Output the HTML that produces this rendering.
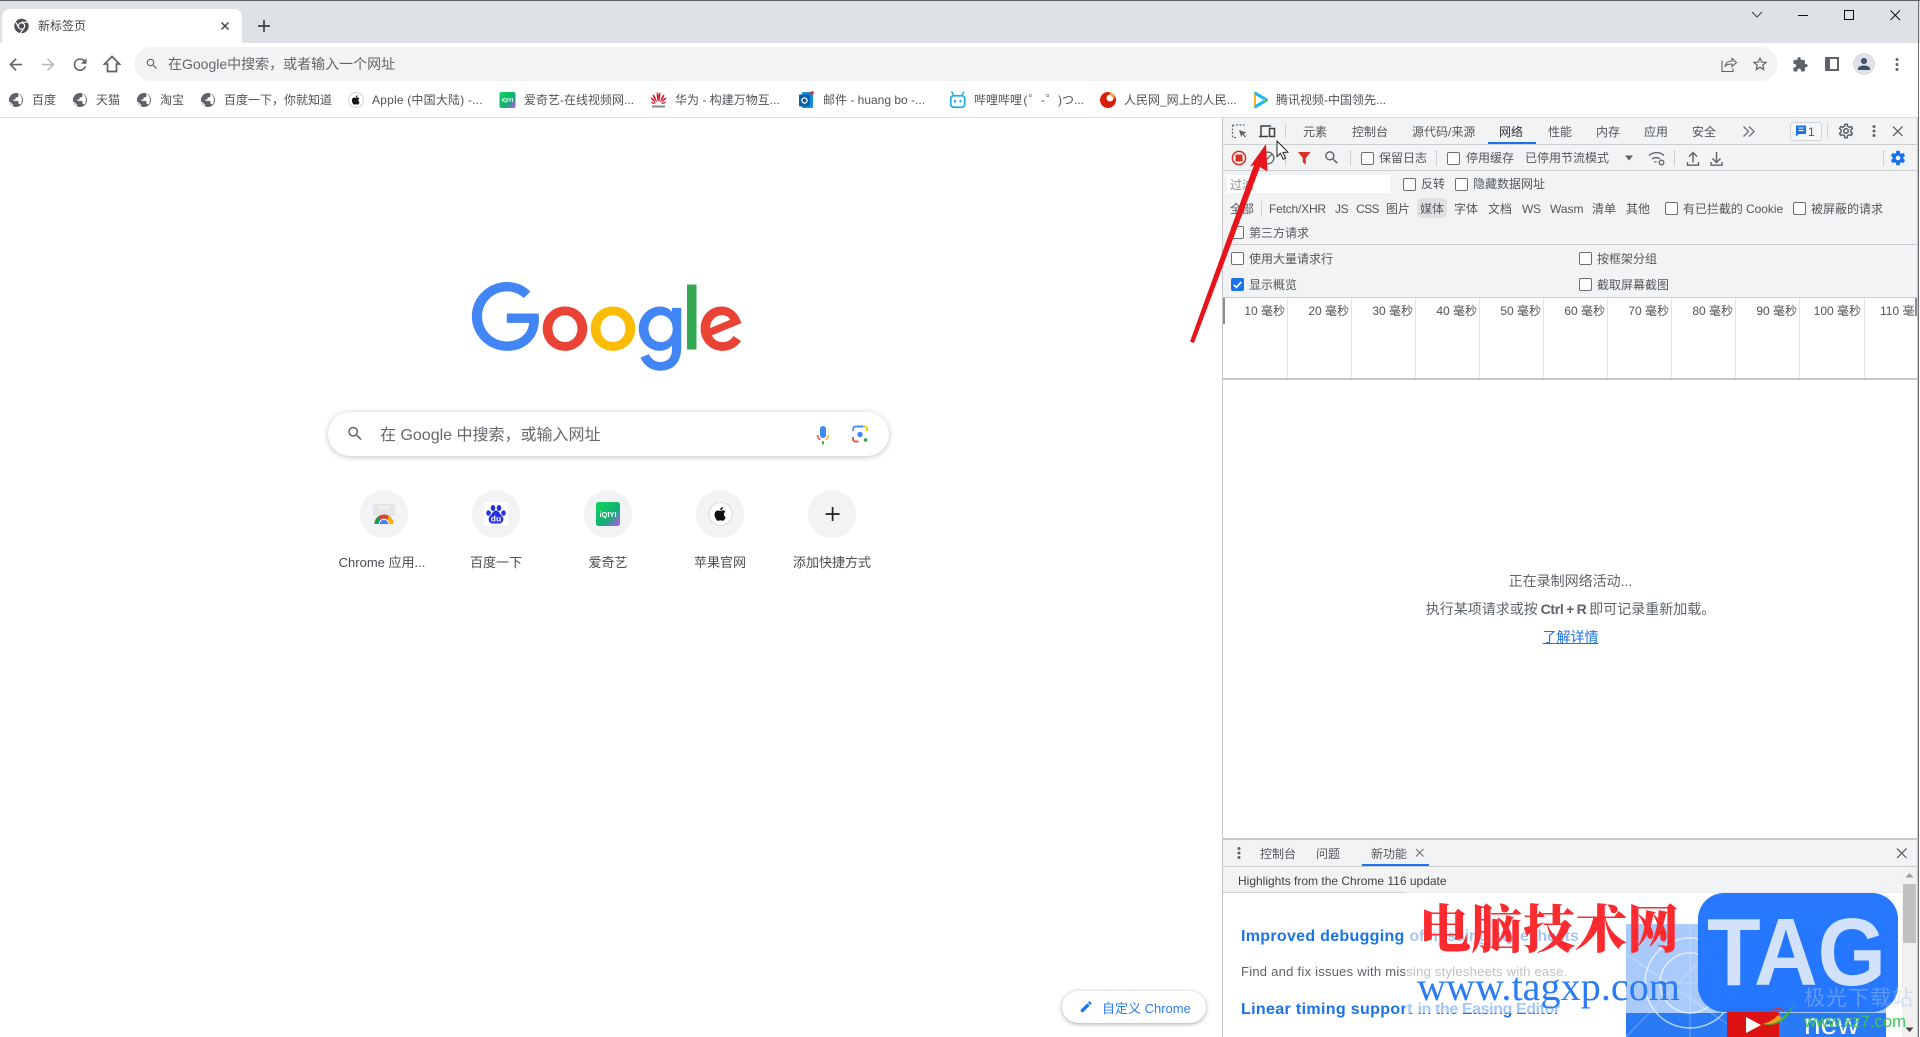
<!DOCTYPE html>
<html lang="zh"><head><meta charset="utf-8"><title>新标签页</title>
<style>
html,body{margin:0;padding:0;width:1920px;height:1037px;overflow:hidden;background:#fff}
body{position:relative;font-family:"Liberation Sans","Noto Sans CJK SC",sans-serif;color:#505357;font-size:12px}
.b{position:absolute}
.t{position:absolute;white-space:nowrap;line-height:16px;height:16px;font-size:12px;color:#54575b}
.k{position:absolute;width:11px;height:11px;border:1px solid #6b6f74;border-radius:2px;background:#fff}
svg.a{position:absolute;left:0;top:0}
.bm{font-size:12px;color:#505357}
.sc{font-size:13px;width:112px;text-align:center;color:#4a4c50}
.ml{font-size:12px;color:#4f5256;width:48px;text-align:right}
</style></head><body>

<!-- chrome frame -->
<div class="b" style="left:0;top:0;width:1920px;height:43px;background:#dee1e6"></div>
<div class="b" style="left:0;top:0;width:1920px;height:1px;background:#5f6368"></div>
<div class="b" style="left:2px;top:9px;width:240px;height:34px;background:#fff;border-radius:8px 8px 0 0"></div>
<div class="b" style="left:134px;top:47px;width:1644px;height:34px;background:#f1f3f4;border-radius:17px"></div>
<div class="b" style="left:0;top:117px;width:1920px;height:1px;background:#dadce0"></div>

<!-- devtools backgrounds -->
<div class="b" style="left:1222px;top:118px;width:696px;height:919px;background:#fff;border-left:1px solid #c4c7cc;box-sizing:border-box"></div>
<div class="b" style="left:1223px;top:118px;width:694px;height:179px;background:#f1f3f4"></div>
<div class="b" style="left:1223px;top:144px;width:694px;height:1px;background:#cbcdd1"></div>
<div class="b" style="left:1223px;top:170px;width:694px;height:1px;background:#cbcdd1"></div>
<div class="b" style="left:1223px;top:244px;width:694px;height:1px;background:#cbcdd1"></div>
<div class="b" style="left:1223px;top:297px;width:694px;height:1px;background:#cbcdd1"></div>
<div class="b" style="left:1223px;top:378px;width:694px;height:2px;background:#c6cacf"></div>
<div class="b" style="left:1223px;top:838px;width:694px;height:2px;background:#c6cacf"></div>
<div class="b" style="left:1223px;top:840px;width:694px;height:53px;background:#f1f3f4"></div>
<div class="b" style="left:1223px;top:866px;width:694px;height:1px;background:#cbcdd1"></div>
<div class="b" style="left:1223px;top:892px;width:679px;height:1px;background:#cbcdd1"></div>
<div class="b" style="left:1917px;top:118px;width:1px;height:919px;background:#c4c7cc"></div>
<div class="b" style="left:1918px;top:0;width:1px;height:1037px;background:#6a6d71"></div>
<div class="b" style="left:1227px;top:175px;width:163px;height:18px;background:#fff"></div>
<div class="b" style="left:1417px;top:198px;width:30px;height:20px;background:#dfe1e5;border-radius:5px"></div>
<div class="b" style="left:1488px;top:142px;width:48px;height:2px;background:#1a73e8"></div>
<div class="b" style="left:1362px;top:864px;width:67px;height:2px;background:#1a73e8"></div>
<div class="b" style="left:1790px;top:122px;width:30px;height:17px;border:1px solid #d0d3d7;border-radius:3px;background:#f6f7f8"></div>
<!-- separators -->
<div class="b" style="left:1285px;top:123px;width:1px;height:16px;background:#cdd0d4"></div>
<div class="b" style="left:1827px;top:123px;width:1px;height:16px;background:#cdd0d4"></div>
<div class="b" style="left:1285px;top:150px;width:1px;height:16px;background:#cdd0d4"></div>
<div class="b" style="left:1350px;top:150px;width:1px;height:16px;background:#cdd0d4"></div>
<div class="b" style="left:1436px;top:150px;width:1px;height:16px;background:#cdd0d4"></div>
<div class="b" style="left:1674px;top:150px;width:1px;height:16px;background:#cdd0d4"></div>
<div class="b" style="left:1883px;top:150px;width:1px;height:16px;background:#cdd0d4"></div>
<div class="b" style="left:1261px;top:201px;width:1px;height:16px;background:#cdd0d4"></div>
<!-- timeline grid -->
<div class="b" style="left:1287px;top:298px;width:1px;height:80px;background:#e3e4e6"></div>
<div class="b" style="left:1351px;top:298px;width:1px;height:80px;background:#e3e4e6"></div>
<div class="b" style="left:1415px;top:298px;width:1px;height:80px;background:#e3e4e6"></div>
<div class="b" style="left:1479px;top:298px;width:1px;height:80px;background:#e3e4e6"></div>
<div class="b" style="left:1543px;top:298px;width:1px;height:80px;background:#e3e4e6"></div>
<div class="b" style="left:1607px;top:298px;width:1px;height:80px;background:#e3e4e6"></div>
<div class="b" style="left:1671px;top:298px;width:1px;height:80px;background:#e3e4e6"></div>
<div class="b" style="left:1735px;top:298px;width:1px;height:80px;background:#e3e4e6"></div>
<div class="b" style="left:1799px;top:298px;width:1px;height:80px;background:#e3e4e6"></div>
<div class="b" style="left:1864px;top:298px;width:1px;height:80px;background:#e3e4e6"></div>
<div class="b" style="left:1223px;top:298px;width:2px;height:26px;background:#8a8d91"></div>
<div class="b" style="left:1915px;top:298px;width:2px;height:18px;background:#8a8d91"></div>

<!-- scrollbar -->
<div class="b" style="left:1902px;top:867px;width:15px;height:170px;background:#f1f1f1"></div>
<div class="b" style="left:1903px;top:884px;width:13px;height:59px;background:#c1c1c1"></div>

<!-- NTP search box & shortcuts -->
<div class="b" style="left:328px;top:412px;width:561px;height:44px;border-radius:22px;background:#fff;box-shadow:0 1px 6px rgba(32,33,36,.28)"></div>
<div class="b" style="left:360px;top:490px;width:48px;height:48px;border-radius:50%;background:#f1f3f4"></div>
<div class="b" style="left:472px;top:490px;width:48px;height:48px;border-radius:50%;background:#f1f3f4"></div>
<div class="b" style="left:584px;top:490px;width:48px;height:48px;border-radius:50%;background:#f1f3f4"></div>
<div class="b" style="left:696px;top:490px;width:48px;height:48px;border-radius:50%;background:#f1f3f4"></div>
<div class="b" style="left:808px;top:490px;width:48px;height:48px;border-radius:50%;background:#f1f3f4"></div>
<div class="b" style="left:1062px;top:991px;width:144px;height:32px;border-radius:16px;background:#fff;box-shadow:0 1px 4px rgba(32,33,36,.4)"></div>

<svg class="a" width="1920" height="1037" viewBox="0 0 1920 1037" xmlns="http://www.w3.org/2000/svg">
<defs>
<g id="globe"><circle cx="8" cy="8" r="7" fill="#5f6368"/><path fill="#fff" d="M7 14.900c-2.600-.4-5-3-5.600-5.600L5 12.500v.9c0 .7.6 1.200 2 1.500zM12.400 12.600c-.2-.5-.7-.9-1.200-.9h-.7V9.600c0-.4-.3-.7-.7-.7H5.500V7.500h1.400c.4 0 .7-.3.7-.7V5.400h1.400c.8 0 1.400-.6 1.400-1.400v-2.400c2.100.8 3.600 3.200 3.600 6.400 0 1.800-.6 3.400-1.600 4.600z"/></g>
</defs>

<!-- tab -->
<circle cx="21.500" cy="26" r="7.200" fill="#4a4d51"/><circle cx="21.500" cy="26" r="3.800" fill="#fff"/><circle cx="21.500" cy="26" r="2.600" fill="#4a4d51"/>
<path d="M21.500 22.200h6.300M18.500 27.500l-3-5.700M23.300 29.400l-3.300 4" stroke="#fff" stroke-width="1.100" fill="none"/>
<path d="M221.500 22.500l7 7m0-7l-7 7" stroke="#45474a" stroke-width="1.500"/>
<path d="M264 20v12M258 26h12" stroke="#3c4043" stroke-width="1.700"/>
<!-- window controls -->
<path d="M1752 12l5 5 5-5" stroke="#3c4043" stroke-width="1" fill="none"/>
<path d="M1798 15.500h10" stroke="#111" stroke-width="1"/>
<rect x="1844.500" y="10.500" width="9" height="9" fill="none" stroke="#111" stroke-width="1"/>
<path d="M1890.500 10.500l9.500 9.500m0-9.500l-9.500 9.500" stroke="#111" stroke-width="1"/>
<!-- nav -->
<g fill="#5f6368">
<path transform="translate(6 55) scale(.8)" d="M20 11H7.830l5.590-5.590L12 4l-8 8 8 8 1.410-1.410L7.830 13H20v-2z"/>
<path transform="translate(38.500 55) scale(.8)" fill="#b7babd" d="M12 4l-1.410 1.410L16.170 11H4v2h12.170l-5.580 5.590L12 20l8-8z"/>
<path transform="translate(70.500 55) scale(.8)" d="M17.650 6.350A7.958 7.958 0 0 0 12 4c-4.420 0-7.990 3.580-7.990 8s3.570 8 7.990 8c3.730 0 6.840-2.550 7.730-6h-2.080A5.990 5.990 0 0 1 12 18c-3.310 0-6-2.690-6-6s2.690-6 6-6c1.660 0 3.140.690 4.220 1.780L13 11h7V4l-2.350 2.350z"/>
</g>
<path d="M112 56.500l-7.500 7.500h3v7.500h9V64h3z" fill="none" stroke="#5f6368" stroke-width="1.700"/>
<path transform="translate(145 57) scale(.58)" fill="#5f6368" d="M15.500 14h-.79l-.28-.27A6.470 6.470 0 0 0 16 9.500 6.500 6.500 0 1 0 9.500 16c1.610 0 3.090-.59 4.230-1.570l.27.280v.79l5 4.990L20.490 19l-4.990-5zm-6 0C7.010 14 5 11.990 5 9.500S7.010 5 9.500 5 14 7.010 14 9.500 11.990 14 9.500 14z"/>
<!-- right toolbar -->
<path d="M1722 60.500v11h11v-3M1725 66c1-3 3.500-5 7-5v-2.500l4.500 4-4.500 4V64c-3 0-5 .5-7 2z" fill="none" stroke="#5f6368" stroke-width="1.100"/>
<path transform="translate(1751 55) scale(.75)" fill="#5f6368" d="M22 9.240l-7.190-.62L12 2 9.190 8.630 2 9.240l5.460 4.730L5.820 21 12 17.270 18.180 21l-1.630-7.030L22 9.240zM12 15.400l-3.760 2.270 1-4.280-3.320-2.880 4.380-.38L12 6.100l1.710 4.040 4.380.38-3.320 2.880 1 4.280L12 15.400z"/>
<path transform="translate(1792 56.500) scale(.68)" fill="#5f6368" d="M20.500 11H19V7c0-1.100-.9-2-2-2h-4V3.500C13 2.120 11.880 1 10.500 1S8 2.120 8 3.500V5H4c-1.100 0-1.990.9-1.990 2v3.800H3.500c1.490 0 2.700 1.210 2.700 2.700s-1.210 2.700-2.700 2.700H2V20c0 1.100.9 2 2 2h3.800v-1.500c0-1.490 1.210-2.700 2.700-2.700 1.490 0 2.700 1.210 2.700 2.700V22H17c1.100 0 2-.9 2-2v-4h1.500c1.380 0 2.500-1.120 2.500-2.500S21.880 11 20.500 11z"/>
<rect x="1825" y="57" width="14" height="14" fill="#5f6368"/><rect x="1830" y="59" width="7" height="10" fill="#fff"/>
<circle cx="1864" cy="64" r="11" fill="#dee1e6"/>
<path transform="translate(1855 55) scale(.75)" fill="#45506a" d="M12 12c2.210 0 4-1.790 4-4s-1.790-4-4-4-4 1.790-4 4 1.790 4 4 4zm0 2c-2.670 0-8 1.340-8 4v2h16v-2c0-2.660-5.330-4-8-4z"/>
<g fill="#5f6368"><circle cx="1897" cy="59.500" r="1.500"/><circle cx="1897" cy="64.500" r="1.500"/><circle cx="1897" cy="69.500" r="1.500"/></g>

<!-- bookmark icons -->
<use href="#globe" x="8" y="92"/><use href="#globe" x="72" y="92"/><use href="#globe" x="136" y="92"/><use href="#globe" x="200" y="92"/>
<circle cx="356" cy="100" r="7.500" fill="#fff" stroke="#d5d5d5"/>
<path transform="translate(350.500 94.500) scale(.46)" fill="#111" d="M17.050 12.540c-.03-2.600 2.120-3.850 2.220-3.910-1.210-1.770-3.090-2.010-3.760-2.040-1.600-.16-3.120.94-3.930.94-.81 0-2.060-.92-3.390-.89-1.740.03-3.350 1.010-4.250 2.570-1.810 3.140-.46 7.800 1.300 10.350.86 1.250 1.890 2.650 3.240 2.600 1.300-.05 1.790-.84 3.360-.84s2.010.84 3.390.81c1.400-.03 2.290-1.270 3.140-2.530.99-1.450 1.400-2.860 1.420-2.930-.03-.01-2.720-1.040-2.740-4.130zM14.470 4.900c.72-.87 1.200-2.080 1.070-3.280-1.030.04-2.280.69-3.020 1.550-.66.77-1.240 2-1.090 3.180 1.150.09 2.330-.58 3.040-1.450z"/>
<defs><linearGradient id="iq" x1="0" y1="0" x2="1" y2="1"><stop offset="0" stop-color="#10d65c"/><stop offset=".6" stop-color="#0fae74"/><stop offset="1" stop-color="#c94dff"/></linearGradient></defs>
<rect x="499.500" y="92" width="16" height="16" rx="2" fill="url(#iq)"/>
<text x="507.500" y="102" font-size="5" font-weight="700" fill="#fff" text-anchor="middle" font-family="Liberation Sans">iQIYI</text>
<!-- huawei -->
<g fill="#e4132a"><path d="M657.800 102.500c-.7-3.500-1.500-7-1-10.500 2 1 2.300 6.500 1 10.500zM659.200 102.500c.7-3.500 1.500-7 1-10.500-2 1-2.300 6.500-1 10.500zM656.800 102.500c-2-2.500-4-5-4.200-8.300 2 .5 4 5 4.200 8.300zM660.200 102.500c2-2.500 4-5 4.200-8.300-2 .5-4 5-4.200 8.300zM656 103c-2.300-1.500-4.800-3-5.500-5.800 2.200.3 4.500 3.500 5.500 5.800zM661 103c2.300-1.500 4.800-3 5.500-5.800-2.200.3-4.500 3.500-5.500 5.800zM655.800 103.800c-2 .2-4-.2-5-1.700 2-.3 3.800.5 5 1.700zM661.200 103.800c2 .2 4-.2 5-1.700-2-.3-3.800.5-5 1.700z"/></g>
<rect x="652" y="105.500" width="13" height="2" fill="#888"/>
<!-- outlook -->
<rect x="802" y="92" width="11" height="16" rx="1" fill="#1490df"/><rect x="799" y="94.500" width="11" height="12" rx="1" fill="#0a5ea8"/>
<circle cx="804.500" cy="100.500" r="2.600" fill="none" stroke="#fff" stroke-width="1.300"/><circle cx="812" cy="93" r="1.800" fill="#d13438"/>
<!-- bilibili -->
<rect x="950.750" y="95.750" width="14" height="11.500" rx="3" fill="#fff" stroke="#23ade5" stroke-width="1.800"/><path d="M953.500 95l-2-3.500M962 95l2-3.500" stroke="#23ade5" stroke-width="1.500"/><rect x="954" y="100" width="2" height="2.500" fill="#23ade5"/><rect x="959.500" y="100" width="2" height="2.500" fill="#23ade5"/>
<!-- renmin -->
<circle cx="1108" cy="100" r="8" fill="#d81e06"/><circle cx="1110" cy="98" r="3.500" fill="#fff"/><path d="M1109 92a5 5 0 0 1 5 7l-2-2z" fill="#f5a54a"/>
<!-- tencent video -->
<path d="M1254 93.500c0-1.500 1-2 2.500-1.400l10.500 6.300c1.300.8 1.300 2.400 0 3.200l-10.500 6.300c-1.500.6-2.500 0-2.500-1.400z" fill="#1fb7ee"/><path d="M1256 95.500l7.500 4.500-7.500 4.500z" fill="#fff"/><path d="M1254 93.500l2 2v9l-2 2z" fill="#f9b91d"/><path d="M1263 98l4 2-4 2z" fill="#7ed321"/>

<!-- Google logo -->
<g transform="translate(471.500 281.500)">
<path fill="#EA4335" d="M115.750 47.180c0 12.770-9.990 22.180-22.250 22.180s-22.250-9.410-22.250-22.180C71.250 34.320 81.240 25 93.500 25s22.250 9.320 22.250 22.180zm-9.740 0c0-7.980-5.790-13.440-12.510-13.440S80.990 39.200 80.990 47.180c0 7.900 5.790 13.440 12.510 13.440s12.510-5.550 12.510-13.440z"/>
<path fill="#FBBC05" d="M163.750 47.180c0 12.770-9.990 22.180-22.250 22.180s-22.250-9.410-22.250-22.180c0-12.850 9.990-22.180 22.250-22.180s22.250 9.320 22.250 22.180zm-9.740 0c0-7.980-5.790-13.440-12.510-13.440s-12.510 5.460-12.510 13.440c0 7.900 5.790 13.440 12.510 13.440s12.510-5.550 12.510-13.440z"/>
<path fill="#4285F4" d="M209.750 26.340v39.820c0 16.380-9.660 23.070-21.080 23.070-10.750 0-17.220-7.190-19.660-13.070l8.480-3.530c1.510 3.610 5.210 7.870 11.170 7.870 7.310 0 11.840-4.510 11.840-13v-3.190h-.34c-2.180 2.690-6.380 5.040-11.680 5.040-11.090 0-21.250-9.660-21.250-22.090 0-12.520 10.160-22.260 21.250-22.260 5.290 0 9.490 2.350 11.680 4.960h.34v-3.610h9.250zm-8.560 20.920c0-7.810-5.210-13.520-11.840-13.520-6.720 0-12.350 5.710-12.350 13.520 0 7.730 5.630 13.360 12.350 13.360 6.630 0 11.840-5.630 11.840-13.360z"/>
<path fill="#34A853" d="M225 3v65h-9.500V3h9.500z"/>
<path fill="#EA4335" d="M262.020 54.480l7.560 5.040c-2.440 3.610-8.320 9.830-18.480 9.830-12.600 0-22.010-9.740-22.010-22.180 0-13.190 9.490-22.180 20.920-22.180 11.510 0 17.140 9.160 18.980 14.110l1.010 2.520-29.650 12.280c2.270 4.450 5.800 6.720 10.750 6.720 4.960 0 8.400-2.440 10.920-6.140zm-23.270-7.980l19.820-8.230c-1.090-2.770-4.370-4.700-8.230-4.700-4.950 0-11.840 4.370-11.590 12.930z"/>
<path fill="#4285F4" d="M35.290 41.410V32H67c.31 1.640.47 3.580.47 5.680 0 7.060-1.930 15.790-8.150 22.010-6.050 6.300-13.780 9.660-24.020 9.660C16.320 69.350.36 53.890.36 34.910.36 15.930 16.320.47 35.300.47c10.500 0 17.980 4.120 23.600 9.490l-6.640 6.640c-4.030-3.780-9.490-6.720-16.970-6.720-13.860 0-24.700 11.170-24.700 25.030 0 13.860 10.840 25.030 24.700 25.030 8.990 0 14.110-3.610 17.390-6.890 2.660-2.660 4.410-6.460 5.100-11.650l-22.490.01z"/>
</g>
<!-- search icons -->
<path transform="translate(346 424.500) scale(.76)" fill="#5f6368" d="M15.500 14h-.79l-.28-.27A6.470 6.470 0 0 0 16 9.500 6.500 6.500 0 1 0 9.500 16c1.610 0 3.090-.59 4.230-1.570l.27.280v.79l5 4.990L20.490 19l-4.990-5zm-6 0C7.010 14 5 11.990 5 9.500S7.010 5 9.500 5 14 7.010 14 9.500 11.990 14 9.500 14z"/>
<rect x="820" y="426" width="6" height="12" rx="3" fill="#4285f4"/>
<path d="M817.500 435a5.500 5.500 0 0 0 3 4.700" fill="none" stroke="#ea4335" stroke-width="1.500"/><path d="M828.500 435a5.500 5.500 0 0 1-3 4.700" fill="none" stroke="#fbbc05" stroke-width="1.500"/><path d="M823 441v3.500" stroke="#34a853" stroke-width="1.800"/>
<path d="M853 431v-2a2.500 2.500 0 0 1 2.500-2.500h2" fill="none" stroke="#4285f4" stroke-width="1.700"/>
<path d="M862.500 426.500h2a2.500 2.500 0 0 1 2.500 2.500v2" fill="none" stroke="#fbbc05" stroke-width="1.700"/>
<path d="M853 437v2a2.500 2.500 0 0 0 2.500 2.500h3" fill="none" stroke="#ea4335" stroke-width="1.700"/>
<rect x="857" y="425.500" width="6" height="2" fill="#4285f4"/>
<circle cx="860" cy="434.500" r="2.700" fill="#4285f4"/><circle cx="865.500" cy="440" r="1.800" fill="#34a853"/>
<!-- shortcut icons -->
<rect x="373" y="504" width="22" height="12" fill="#e6e6e6"/><rect x="378" y="506" width="12" height="3" fill="#f1f1f1"/>
<path d="M374.500 524a9.500 9.500 0 0 1 19 0z" fill="#db4437"/><path d="M388.500 515.700a9.500 9.500 0 0 1 5 8.300h-6z" fill="#f4b400"/><path d="M374.500 524a9.500 9.500 0 0 1 4-7.800l3 7.800z" fill="#0f9d58"/><path d="M379.500 524a4.500 4.500 0 0 1 9 0z" fill="#4285f4"/><path d="M378.700 524a5.300 5.300 0 0 1 10.600 0h-1a4.300 4.300 0 0 0-8.600 0z" fill="#fff"/>
<rect x="484" y="502" width="24" height="24" rx="2" fill="#fff"/>
<g fill="#2932e1"><ellipse cx="488.500" cy="513" rx="2.300" ry="2.800"/><ellipse cx="493" cy="508" rx="2.300" ry="3"/><ellipse cx="499" cy="508" rx="2.300" ry="3"/><ellipse cx="503.500" cy="513" rx="2.300" ry="2.800"/><path d="M496 510.500c3 0 3.700 3.500 6 5.500 2.800 2.400 1 7.500-2.500 7.500h-7c-3.500 0-5.300-5-2.500-7.500 2.300-2 3-5.500 6-5.500z"/></g>
<text x="496" y="521.500" font-size="8.500" font-weight="700" fill="#fff" text-anchor="middle" font-family="Liberation Sans">du</text>
<rect x="596" y="502" width="24" height="24" rx="2.500" fill="url(#iq)"/>
<text x="608" y="517" font-size="7.500" font-weight="700" fill="#fff" text-anchor="middle" font-family="Liberation Sans">iQIYI</text>
<circle cx="720.500" cy="514" r="11.500" fill="#fff" stroke="#d8d8d8"/>
<path transform="translate(712.500 506) scale(.67)" fill="#111" d="M17.050 12.540c-.03-2.600 2.120-3.850 2.220-3.910-1.210-1.770-3.090-2.010-3.760-2.040-1.600-.16-3.120.94-3.930.94-.81 0-2.060-.92-3.390-.89-1.740.03-3.350 1.010-4.250 2.570-1.810 3.140-.46 7.800 1.300 10.350.86 1.250 1.890 2.650 3.240 2.600 1.300-.05 1.790-.84 3.360-.84s2.010.84 3.390.81c1.400-.03 2.290-1.270 3.140-2.530.99-1.450 1.400-2.860 1.420-2.930-.03-.01-2.720-1.040-2.740-4.130zM14.470 4.900c.72-.87 1.200-2.080 1.070-3.280-1.030.04-2.280.69-3.020 1.550-.66.77-1.240 2-1.090 3.180 1.150.09 2.330-.58 3.040-1.450z"/>
<path d="M832.600 507v14M825.600 514h14" stroke="#202124" stroke-width="1.700"/>
<path transform="translate(1079 999.500) scale(.6)" fill="#1a73e8" d="M3 17.250V21h3.750L17.810 9.940l-3.750-3.750L3 17.250zM20.710 7.040a1 1 0 0 0 0-1.410l-2.340-2.340a1 1 0 0 0-1.410 0l-1.830 1.830 3.750 3.750 1.830-1.830z"/>

<!-- devtools icons row 1 -->
<path d="M1232.500 125h12M1232.500 125v12.500h5M1232.500 125" fill="none" stroke="#6b6f74" stroke-width="1.200" stroke-dasharray="2 1.500"/>
<path d="M1239 130l7.500 2.500-3 1.200 2.500 3-1 .8-2.500-3-1.300 2.500z" fill="#5f6368"/>
<path d="M1261 136.500v-10.500h10M1259 136.500h9" fill="none" stroke="#3c4043" stroke-width="1.500"/><rect x="1269.500" y="128.500" width="5" height="8" fill="#f1f3f4" stroke="#3c4043" stroke-width="1.500"/>
<path d="M1743.500 126.500l5 5-5 5M1749 126.500l5 5-5 5" fill="none" stroke="#70757a" stroke-width="1.400"/>
<path d="M1796 125.500h10v8.500h-7l-3 2.500z" fill="#1a73e8"/><path d="M1798.500 128h5M1798.500 130.500h5" stroke="#fff" stroke-width="1"/>
<path transform="translate(1837 122) scale(.75)" fill="#5f6368" d="M19.430 12.980c.04-.32.07-.64.07-.98 0-.34-.03-.66-.07-.98l2.110-1.650c.19-.15.24-.42.12-.64l-2-3.460c-.09-.16-.26-.25-.44-.25-.06 0-.12.01-.17.03l-2.490 1c-.52-.4-1.080-.73-1.690-.98l-.38-2.650C14.460 2.180 14.250 2 14 2h-4c-.25 0-.46.18-.49.42l-.38 2.650c-.61.25-1.170.59-1.690.98l-2.490-1c-.06-.02-.12-.03-.18-.03-.17 0-.34.09-.43.25l-2 3.460c-.13.22-.07.49.12.64l2.110 1.650c-.04.32-.07.65-.07.98 0 .33.03.66.07.98l-2.110 1.650c-.19.15-.24.42-.12.64l2 3.460c.09.16.26.25.44.25.06 0 .12-.01.17-.03l2.490-1c.52.4 1.080.73 1.690.98l.38 2.650c.03.24.24.42.49.42h4c.25 0 .46-.18.49-.42l.38-2.650c.61-.25 1.170-.59 1.690-.98l2.490 1c.06.02.12.03.18.03.17 0 .34-.09.43-.25l2-3.460c.12-.22.07-.49-.12-.64l-2.110-1.650zm-1.980-1.710c.04.31.05.52.05.73 0 .21-.02.43-.05.73l-.14 1.130.89.7 1.080.84-.7 1.210-1.270-.51-1.040-.42-.9.68c-.43.32-.84.56-1.250.73l-1.060.43-.16 1.130-.2 1.350h-1.400l-.19-1.350-.16-1.130-1.060-.43c-.43-.18-.83-.41-1.230-.71l-.91-.7-1.060.43-1.270.51-.7-1.210 1.080-.84.89-.7-.14-1.130c-.03-.31-.05-.54-.05-.74s.02-.43.05-.73l.14-1.130-.89-.7-1.080-.84.7-1.210 1.270.51 1.040.42.9-.68c.43-.32.84-.56 1.250-.73l1.060-.43.16-1.130.2-1.350h1.390l.19 1.350.16 1.130 1.060.43c.43.18.83.41 1.230.71l.91.7 1.060-.43 1.270-.51.7 1.210-1.070.85-.89.7.14 1.130zM12 8c-2.210 0-4 1.790-4 4s1.790 4 4 4 4-1.790 4-4-1.790-4-4-4zm0 6c-1.100 0-2-.9-2-2s.9-2 2-2 2 .9 2 2-.9 2-2 2z"/>
<g fill="#5f6368"><circle cx="1874" cy="126.500" r="1.500"/><circle cx="1874" cy="131" r="1.500"/><circle cx="1874" cy="135.500" r="1.500"/></g>
<path d="M1893 126.500l9.500 9.500m0-9.500l-9.500 9.500" stroke="#5f6368" stroke-width="1.300"/>
<!-- devtools icons row 2 -->
<circle cx="1239" cy="158" r="6.600" fill="none" stroke="#d93025" stroke-width="1.500"/><rect x="1235.500" y="154.500" width="7" height="7" rx=".5" fill="#d93025"/>
<circle cx="1268" cy="158" r="5.800" fill="none" stroke="#5f6368" stroke-width="1.300"/><path d="M1264 162l8-8" stroke="#5f6368" stroke-width="1.300"/>
<path d="M1298 152h12.500l-4.700 6v6.500l-3-2V158z" fill="#d93025"/>
<path transform="translate(1323 149) scale(.72)" fill="#5f6368" d="M15.500 14h-.79l-.28-.27A6.470 6.470 0 0 0 16 9.500 6.500 6.500 0 1 0 9.500 16c1.610 0 3.090-.59 4.230-1.570l.27.280v.79l5 4.990L20.490 19l-4.990-5zm-6 0C7.010 14 5 11.990 5 9.500S7.010 5 9.500 5 14 7.010 14 9.500 11.990 14 9.500 14z"/>
<path d="M1625 155.500h8l-4 5z" fill="#5f6368"/>
<path d="M1649 155.500a11 11 0 0 1 15 0M1652 159a6.500 6.500 0 0 1 8 0M1654.500 162a2.500 2.500 0 0 1 2 0" fill="none" stroke="#5f6368" stroke-width="1.400"/><circle cx="1661.500" cy="162.500" r="2.300" fill="none" stroke="#5f6368" stroke-width="1.300"/>
<path d="M1693 162.500v-9.500M1689 156.500l4-4 4 4M1687.500 162v3.200h11V162" fill="none" stroke="#5f6368" stroke-width="1.400"/>
<path d="M1716.500 152v10M1712.500 158.500l4 4 4-4M1711 162v3.200h11V162" fill="none" stroke="#5f6368" stroke-width="1.400"/>
<path transform="translate(1889 149) scale(.75)" fill="#1a73e8" d="M19.140 12.940c.04-.3.060-.61.060-.94 0-.32-.02-.64-.07-.94l2.030-1.580a.49.49 0 0 0 .12-.61l-1.920-3.320a.488.488 0 0 0-.59-.22l-2.390.96c-.5-.38-1.030-.7-1.620-.94l-.36-2.540a.484.484 0 0 0-.48-.41h-3.840c-.24 0-.43.17-.47.41l-.36 2.540c-.59.24-1.130.57-1.620.94l-2.390-.96c-.22-.08-.47 0-.59.22L2.740 8.870c-.12.21-.08.47.12.61l2.030 1.580c-.05.3-.09.63-.09.94s.02.64.07.94l-2.030 1.580a.49.49 0 0 0-.12.61l1.920 3.320c.12.22.37.29.59.22l2.390-.96c.5.38 1.030.7 1.620.94l.36 2.540c.05.24.24.41.48.41h3.840c.24 0 .44-.17.47-.41l.36-2.540c.59-.24 1.130-.56 1.620-.94l2.390.96c.22.08.47 0 .59-.22l1.920-3.320c.12-.22.07-.47-.12-.61l-2.010-1.580zM12 15a3 3 0 1 1 0-6 3 3 0 0 1 0 6z"/>
<!-- drawer icons -->
<g fill="#5f6368"><circle cx="1239" cy="848.500" r="1.500"/><circle cx="1239" cy="853" r="1.500"/><circle cx="1239" cy="857.500" r="1.500"/></g>
<path d="M1416 849l7.500 7.500m0-7.500l-7.500 7.500" stroke="#6b6f74" stroke-width="1.100"/>
<path d="M1897 848.500l9.500 9.500m0-9.500l-9.500 9.500" stroke="#5f6368" stroke-width="1.300"/>
<path d="M1909.500 873l4 4.500h-8z" fill="#a0a0a0"/><path d="M1905.500 1027.500h8l-4 4.500z" fill="#444"/>
</svg>

<!-- tab/toolbar text -->
<div class="t" style="left:38px;top:18px;color:#45474a">新标签页</div>
<div class="t" style="left:168px;top:56px;font-size:14px;color:#62666a">在Google中搜索，或者输入一个网址</div>
<div class="t bm" style="left:32px;top:92px">百度</div>
<div class="t bm" style="left:96px;top:92px">天猫</div>
<div class="t bm" style="left:160px;top:92px">淘宝</div>
<div class="t bm" style="left:224px;top:92px">百度一下，你就知道</div>
<div class="t bm" style="left:372px;top:92px;letter-spacing:.2px">Apple (中国大陆) -...</div>
<div class="t bm" style="left:524px;top:92px">爱奇艺-在线视频网...</div>
<div class="t bm" style="left:675px;top:92px">华为 - 构建万物互...</div>
<div class="t bm" style="left:823px;top:92px">邮件 - huang bo -...</div>
<div class="t bm" style="left:974px;top:92px;word-spacing:-2px">哔哩哔哩 ( ゜- ゜)つ...</div>
<div class="t bm" style="left:1124px;top:92px">人民网_网上的人民...</div>
<div class="t bm" style="left:1276px;top:92px">腾讯视频-中国领先...</div>

<!-- NTP text -->
<div class="t" style="left:380px;top:428px;font-size:16px;color:#65686c">在 Google 中搜索，或输入网址</div>
<div class="t sc" style="left:326px;top:555px;">Chrome 应用...</div>
<div class="t sc" style="left:440px;top:555px;">百度一下</div>
<div class="t sc" style="left:552px;top:555px;">爱奇艺</div>
<div class="t sc" style="left:664px;top:555px;">苹果官网</div>
<div class="t sc" style="left:776px;top:555px;">添加快捷方式</div>
<div class="t" style="left:1102px;top:1001px;font-size:13px;color:#2b7de9">自定义 Chrome</div>

<!-- devtools text -->
<div class="t" style="left:1303px;top:124px">元素</div>
<div class="t" style="left:1352px;top:124px">控制台</div>
<div class="t" style="left:1412px;top:124px">源代码/来源</div>
<div class="t" style="left:1499px;top:124px;color:#2f3236">网络</div>
<div class="t" style="left:1548px;top:124px">性能</div>
<div class="t" style="left:1596px;top:124px">内存</div>
<div class="t" style="left:1644px;top:124px">应用</div>
<div class="t" style="left:1692px;top:124px">安全</div>
<div class="t" style="left:1808px;top:124px">1</div>

<div class="k" style="left:1361px;top:152px"></div><div class="t" style="left:1379px;top:150px">保留日志</div>
<div class="k" style="left:1447px;top:152px"></div><div class="t" style="left:1466px;top:150px">停用缓存</div>
<div class="t" style="left:1525px;top:150px">已停用节流模式</div>

<div class="t" style="left:1230px;top:177px;color:#8a8d91">过滤</div>
<div class="k" style="left:1403px;top:178px"></div><div class="t" style="left:1421px;top:176px">反转</div>
<div class="k" style="left:1455px;top:178px"></div><div class="t" style="left:1473px;top:176px">隐藏数据网址</div>

<div class="t" style="left:1230px;top:201px">全部</div>
<div class="t" style="left:1269px;top:201px;letter-spacing:-.2px">Fetch/XHR</div>
<div class="t" style="left:1335px;top:201px;letter-spacing:-.4px">JS</div>
<div class="t" style="left:1356px;top:201px;letter-spacing:-.6px">CSS</div>
<div class="t" style="left:1386px;top:201px">图片</div>
<div class="t" style="left:1420px;top:201px">媒体</div>
<div class="t" style="left:1454px;top:201px">字体</div>
<div class="t" style="left:1488px;top:201px">文档</div>
<div class="t" style="left:1522px;top:201px;letter-spacing:-.3px">WS</div>
<div class="t" style="left:1550px;top:201px">Wasm</div>
<div class="t" style="left:1592px;top:201px">清单</div>
<div class="t" style="left:1626px;top:201px">其他</div>
<div class="k" style="left:1665px;top:202px"></div><div class="t" style="left:1683px;top:201px;letter-spacing:-.05px">有已拦截的 Cookie</div>
<div class="k" style="left:1793px;top:202px"></div><div class="t" style="left:1811px;top:201px">被屏蔽的请求</div>

<div class="k" style="left:1231px;top:226px"></div><div class="t" style="left:1249px;top:225px">第三方请求</div>
<div class="k" style="left:1231px;top:252px"></div><div class="t" style="left:1249px;top:251px">使用大量请求行</div>
<div class="k" style="left:1579px;top:252px"></div><div class="t" style="left:1597px;top:251px">按框架分组</div>
<div class="b" style="left:1231px;top:278px;width:13px;height:13px;border-radius:2px;background:#1a73e8"></div>
<svg class="a" style="left:1231px;top:278px" width="13" height="13"><path d="M2.800 6.800l2.600 2.600 4.800-5.400" fill="none" stroke="#fff" stroke-width="1.700"/></svg>
<div class="t" style="left:1249px;top:277px">显示概览</div>
<div class="k" style="left:1579px;top:278px"></div><div class="t" style="left:1597px;top:277px">截取屏幕截图</div>

<div class="t ml" style="left:1237px;top:303px">10 毫秒</div>
<div class="t ml" style="left:1301px;top:303px">20 毫秒</div>
<div class="t ml" style="left:1365px;top:303px">30 毫秒</div>
<div class="t ml" style="left:1429px;top:303px">40 毫秒</div>
<div class="t ml" style="left:1493px;top:303px">50 毫秒</div>
<div class="t ml" style="left:1557px;top:303px">60 毫秒</div>
<div class="t ml" style="left:1621px;top:303px">70 毫秒</div>
<div class="t ml" style="left:1685px;top:303px">80 毫秒</div>
<div class="t ml" style="left:1749px;top:303px">90 毫秒</div>
<div class="t ml" style="left:1813px;top:303px">100 毫秒</div>
<div class="b" style="left:1880px;top:303px;width:35px;height:16px;overflow:hidden"><div class="t" style="left:0;top:0">110 毫秒</div></div>

<div class="t" style="left:1224px;width:693px;text-align:center;top:572px;font-size:14px;line-height:18px;height:18px;color:#5f6368">正在录制网络活动...</div>
<div class="t" style="left:1224px;width:693px;text-align:center;top:600px;font-size:14px;line-height:18px;height:18px;color:#5f6368;word-spacing:-1px">执行某项请求或按 <b style="letter-spacing:-.3px">Ctrl + R</b> 即可记录重新加载。</div>
<div class="t" style="left:1224px;width:693px;text-align:center;top:628px;font-size:14px;line-height:18px;height:18px;color:#1a73e8"><span style="text-decoration:underline">了解详情</span></div>

<div class="t" style="left:1260px;top:846px">控制台</div>
<div class="t" style="left:1316px;top:846px">问题</div>
<div class="t" style="left:1371px;top:846px">新功能</div>
<div class="t" style="left:1238px;top:873px;color:#3f4246">Highlights from the Chrome 116 update</div>
<div class="t" style="left:1241px;top:928px;font-size:16px;line-height:18px;height:18px;font-weight:700;color:#1a73e8;letter-spacing:.3px">Improved debugging <span style="letter-spacing:-.1px">of missing stylesheets</span></div>
<div class="t" style="left:1241px;top:963px;font-size:13px;line-height:18px;height:18px;color:#5f6368;letter-spacing:.25px">Find and fix issues with missing stylesheets with ease.</div>
<div class="t" style="left:1241px;top:1001px;font-size:16px;line-height:18px;height:18px;font-weight:700;color:#1a73e8;letter-spacing:.35px">Linear timing support <span style="letter-spacing:-.4px">in the Easing Editor</span></div>

<!-- new-feature image -->
<div class="b" style="left:1626px;top:924px;width:260px;height:113px;background:#2a7af5;overflow:hidden">
<svg width="260" height="113" style="position:absolute;left:0;top:0"><g fill="none" stroke="#fff" stroke-opacity=".65" stroke-width="1.500"><circle cx="64" cy="59" r="45"/><circle cx="64" cy="59" r="30"/></g><g stroke="#fff" stroke-opacity=".3" fill="none"><path d="M0 30L120 113M0 113L110 0M64 0v113M0 59h130"/></g></svg>
<div class="b" style="left:178px;top:86px;font-size:30px;line-height:30px;color:#fff;letter-spacing:0">new</div>
</div>
<!-- white haze watermark -->
<div class="b" style="left:1405px;top:892px;width:497px;height:121px;background:rgba(255,255,255,.6)"></div>
<div class="b" style="left:1727px;top:1007px;width:52px;height:30px;background:#dd1212;border-radius:7px 7px 0 0"></div>
<svg class="a" style="left:1727px;top:1007px" width="52" height="30"><path d="M19 10l15 8-15 8z" fill="#fff"/></svg>

<!-- watermark text -->
<div class="t" style="left:1419px;top:896px;height:60px;line-height:60px;font-size:52px;font-family:'Noto Serif CJK SC','Liberation Serif',serif;font-weight:900;color:#fb2b30">电脑技术网</div>
<div class="t" style="left:1417px;top:964px;height:46px;line-height:46px;font-size:40px;letter-spacing:.1px;font-family:'Liberation Serif',serif;color:#2a7bf6">www.tagxp.com</div>
<!-- TAG logo -->
<div class="b" style="left:1698px;top:893px;width:200px;height:119px;border-radius:26px;background:#1f74ff;opacity:.96"></div>
<svg class="a" style="left:1698px;top:893px" width="200" height="119"><text x="9" y="92" font-family="Liberation Sans" font-weight="700" font-size="96" fill="#d3e2fb" textLength="179" lengthAdjust="spacingAndGlyphs">TAG</text></svg>
<div class="t" style="left:1804px;top:988px;height:22px;line-height:22px;font-size:21px;color:rgba(170,195,230,.45);letter-spacing:1px;font-weight:400">极光下载站</div>
<svg class="a" style="left:1760px;top:1000px" width="45" height="30"><path d="M2 24c12 1 24-6 31-20-2 12-14 24-31 20z" fill="#44b53a"/><path d="M2 24c6-1 11-4 16-9l4 3c-6 5-13 7-20 6z" fill="#f2a21e"/><path d="M12 12a7 7 0 0 1 12 0" fill="none" stroke="#c34" stroke-width="1.500"/></svg>
<div class="t" style="left:1804px;top:1011px;height:22px;line-height:22px;font-size:16.700px;color:#3ec45a;font-family:'Liberation Sans',sans-serif">www.xz7.com</div>

<!-- red arrow + cursor -->
<svg class="a" width="1920" height="1037" style="pointer-events:none">
<path d="M1266 144L1267.500 171.500 1260 167 1194 343 1190 341.500 1254 165 1250 166.500z" fill="#e8141c"/>
<path d="M1277 141v15.500l3.500-3.300 2.700 6 2.400-1-2.700-5.800 5-.2z" fill="#fff" stroke="#222" stroke-width="1"/>
</svg>
</body></html>
